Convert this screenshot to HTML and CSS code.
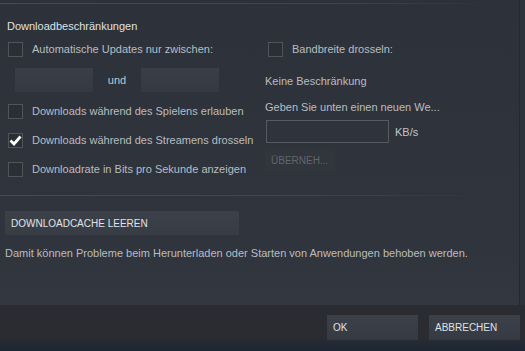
FILE: index.html
```html
<!DOCTYPE html>
<html lang="de">
<head>
  <meta charset="UTF-8" />
  <title>Downloads</title>
  <link rel="stylesheet" href="styles.css">
</head>
<body>
  <div class="dialog">
    <div class="content-wrap">
      <div class="content">
        <div class="rule top-rule"></div>
        <h2 class="section-title">Downloadbeschränkungen</h2>

        <div class="columns">
          <div class="col left-col">
            <label class="check-row">
              <span class="box"></span>
              <span>Automatische Updates nur zwischen:</span>
            </label>
            <div class="time-row">
              <span class="field"></span>
              <span class="und">und</span>
              <span class="field"></span>
            </div>
            <label class="check-row r-play">
              <span class="box"></span>
              <span>Downloads während des Spielens erlauben</span>
            </label>
            <label class="check-row r-stream">
              <span class="box checked">
                <svg width="13" height="11" viewBox="0 0 13 11"><path d="M1.5 5.5 L5 9 L11.5 1.5" fill="none" stroke="#fff" stroke-width="2.8"/></svg>
              </span>
              <span>Downloads während des Streamens drosseln</span>
            </label>
            <label class="check-row r-bits">
              <span class="box"></span>
              <span>Downloadrate in Bits pro Sekunde anzeigen</span>
            </label>
          </div>

          <div class="col right-col">
            <label class="check-row">
              <span class="box"></span>
              <span>Bandbreite drosseln:</span>
            </label>
            <div class="plain limit">Keine Beschränkung</div>
            <div class="plain hint">Geben Sie unten einen neuen We...</div>
            <div class="rate-row">
              <span class="rate-input"></span>
              <span class="unit">KB/s</span>
            </div>
            <button class="btn apply">ÜBERNEH...</button>
          </div>
        </div>

        <div class="rule mid-rule"></div>
        <button class="btn cache">DOWNLOADCACHE LEEREN</button>
        <p class="note">Damit können Probleme beim Herunterladen oder Starten von Anwendungen behoben werden.</p>
      </div>
      <div class="scroll-track"></div>
    </div>

    <div class="footer">
      <button class="btn foot-btn">OK</button>
      <button class="btn foot-btn">ABBRECHEN</button>
    </div>
  </div>
</body>
</html>
```

FILE: styles.css
```css
html, body {
  margin: 0;
  padding: 0;
  height: 100%;
  background: #2a2c31;
  font-family: "Liberation Sans", Arial, sans-serif;
  font-size: 11px;
  color: #b9bdc1;
  overflow: hidden;
}

.dialog {
  display: flex;
  flex-direction: column;
  width: 525px;
  height: 351px;
  background: linear-gradient(to bottom, #2a2c31 96%, #1d2734 100%);
}

.content-wrap {
  display: flex;
  height: 305px;
}

.content {
  width: 520px;
  background: linear-gradient(to bottom, #2d3139 0%, #30343c 80%, #33373f 100%);
}

.scroll-track {
  width: 5px;
  background: #2e323a;
  border-left: 1px solid #25282d;
}

.rule {
  height: 1px;
  width: 500px;
  background: linear-gradient(to right, #454b54 0%, #3f444c 70%, rgba(63, 68, 76, 0) 100%);
}

.top-rule {
  margin-top: 3px;
}

.section-title {
  margin: 15px 0 0 7px;
  font-size: 11px;
  font-weight: normal;
  line-height: 14px;
  color: #dfe2e5;
}

.columns {
  display: flex;
  margin-top: 9px;
}

.col {
  display: flex;
  flex-direction: column;
}

.left-col {
  flex: none;
  width: 265px;
  padding-left: 8px;
  box-sizing: border-box;
}

.check-row {
  display: flex;
  align-items: center;
  gap: 9px;
  height: 15px;
  line-height: 15px;
  white-space: nowrap;
}

.box {
  width: 13px;
  height: 13px;
  border: 1px solid #50555c;
  background: #2a2e35;
  display: flex;
  align-items: center;
  justify-content: center;
  flex: none;
}

.box svg {
  display: block;
}

.time-row {
  display: flex;
  align-items: center;
  margin: 11px 0 0 7px;
  height: 24px;
}

.field {
  width: 78px;
  height: 24px;
  background: linear-gradient(to bottom, #3a3f47, #353a42);
}

.und {
  width: 48px;
  text-align: center;
  color: #c2c6ca;
}

.r-play {
  margin-top: 12px;
}

.r-stream,
.r-bits {
  margin-top: 14px;
}

.right-col .check-row {
  margin-left: 3px;
}

.plain {
  line-height: 14px;
  color: #b9bdc1;
  white-space: nowrap;
}

.limit {
  margin-top: 17px;
}

.hint {
  margin-top: 12px;
}

.rate-row {
  display: flex;
  align-items: center;
  gap: 6px;
  margin-top: 6px;
  margin-left: 1px;
}

.rate-input {
  width: 121px;
  height: 21px;
  border: 1px solid #565b62;
  background: #2f333b;
}

.unit {
  color: #c2c6ca;
}

.btn {
  border: none;
  font-family: "Liberation Sans", Arial, sans-serif;
  text-align: left;
  padding: 0 0 0 6px;
  cursor: pointer;
}

.apply {
  margin-top: 5px;
  width: 70px;
  height: 25px;
  font-size: 10px;
  color: #62666c;
  background: #31353c;
}

.mid-rule {
  margin-top: 18px;
  width: 490px;
}

.cache {
  display: block;
  margin: 15px 0 0 5px;
  width: 234px;
  height: 24px;
  font-size: 10px;
  color: #e1e4e7;
  background: linear-gradient(to bottom, #3b4049, #373c45);
}

.note {
  margin: 11px 0 0 5px;
  line-height: 14px;
  color: #b9bdc1;
}

.footer {
  display: flex;
  justify-content: flex-end;
  gap: 11px;
  padding: 10px 5px 0 0;
}

.foot-btn {
  width: 91px;
  height: 25px;
  font-size: 10px;
  color: #dfe2e5;
  background: linear-gradient(to bottom, #3b4049, #363b43);
}
```
